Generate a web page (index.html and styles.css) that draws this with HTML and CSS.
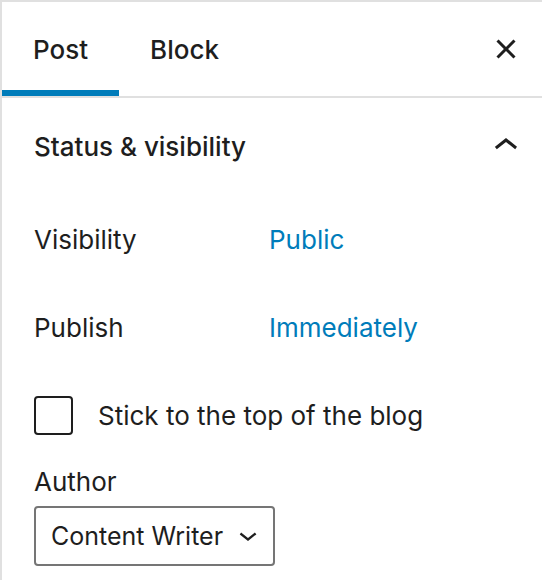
FILE: index.html
```html
<!DOCTYPE html>
<html>
<head>
<meta charset="utf-8">
<link rel="stylesheet" href="styles.css">
</head>
<body>
<div class="sidebar">
  <div class="header">
    <div class="tabs">
      <div class="tab active">Post</div>
      <div class="tab">Block</div>
    </div>
    <div class="icon-btn close">
      <svg viewBox="0 0 24 24" width="48" height="48"><path d="M12 13.06l3.712 3.713 1.061-1.06L13.061 12l3.712-3.712-1.06-1.06L12 10.938 8.288 7.227l-1.061 1.06L10.939 12l-3.712 3.712 1.06 1.061L12 13.061z"/></svg>
    </div>
  </div>
  <div class="panel">
    <div class="panel-title">
      <span>Status &amp; visibility</span>
      <div class="icon-btn">
        <svg viewBox="0 0 24 24" width="48" height="48"><path d="M6.5 12.4L12 8l5.5 4.4-.9 1.2L12 10l-4.6 3.6-1-1.2z"/></svg>
      </div>
    </div>
    <div class="panel-body">
      <div class="row row-first">
        <span class="label">Visibility</span>
        <span class="link">Public</span>
      </div>
      <div class="row row-second">
        <span class="label">Publish</span>
        <span class="link">Immediately</span>
      </div>
      <div class="check-row">
        <span class="checkbox"></span>
        <span class="check-label">Stick to the top of the blog</span>
      </div>
      <div class="author-label">Author</div>
      <div class="select">
        <span class="select-value">Content Writer</span>
        <svg viewBox="6 8 12 10" width="18" height="15"><path d="M17.5 11.6L12 16l-5.5-4.4.9-1.2L12 14l4.6-3.6 1 1.2z"/></svg>
      </div>
    </div>
  </div>
</div>
</body>
</html>
```

FILE: styles.css
```css
html, body {
  margin: 0;
  padding: 0;
  background: #fff;
}
body {
  font-family: Inter, "Liberation Sans", sans-serif;
  color: #1e1e1e;
  font-size: 26px;
  overflow: hidden;
}
.sidebar {
  width: 540px;
  height: 578px;
  border-top: 2px solid #e0e0e0;
  border-left: 2px solid #e0e0e0;
  overflow: hidden;
}
.header {
  display: flex;
  align-items: center;
  justify-content: space-between;
  height: 94px;
  border-bottom: 2px solid #e0e0e0;
}
.tabs {
  display: flex;
  height: 100%;
}
.tab {
  display: flex;
  align-items: center;
  padding: 0 31px;
  font-weight: 500;
  font-size: 26px;
}
.tab.active {
  box-shadow: inset 0 -6px 0 #007cba;
}
.icon-btn {
  width: 48px;
  height: 48px;
  display: flex;
  align-items: center;
  justify-content: center;
  margin-right: 12px;
}
.icon-btn svg {
  fill: #1e1e1e;
  display: block;
}
.panel-title {
  display: flex;
  align-items: center;
  justify-content: space-between;
  height: 96px;
  padding-left: 32px;
  font-weight: 500;
}
.panel-body {
  padding-left: 32px;
  display: flex;
  flex-direction: column;
  align-items: flex-start;
}
.row {
  display: flex;
  align-items: center;
  line-height: 32px;
}
.row-first { height: 92px; }
.row-second { height: 84px; }
.label {
  width: 235px;
}
.link {
  color: #007cba;
}
.check-row {
  display: flex;
  align-items: center;
  margin-top: 26px;
  gap: 25px;
}
.checkbox {
  width: 35px;
  height: 35px;
  border: 2px solid #1e1e1e;
  border-radius: 4px;
}
.author-label {
  margin-top: 31px;
  line-height: 32px;
}
.select {
  margin-top: 8px;
  box-sizing: border-box;
  width: 241px;
  height: 60px;
  border: 2px solid #757575;
  border-radius: 4px;
  display: flex;
  align-items: center;
  justify-content: space-between;
  padding: 0 16px 0 15px;
}
.select-value {
  font-size: 25px;
}
.select svg {
  fill: #1e1e1e;
  display: block;
}
```
